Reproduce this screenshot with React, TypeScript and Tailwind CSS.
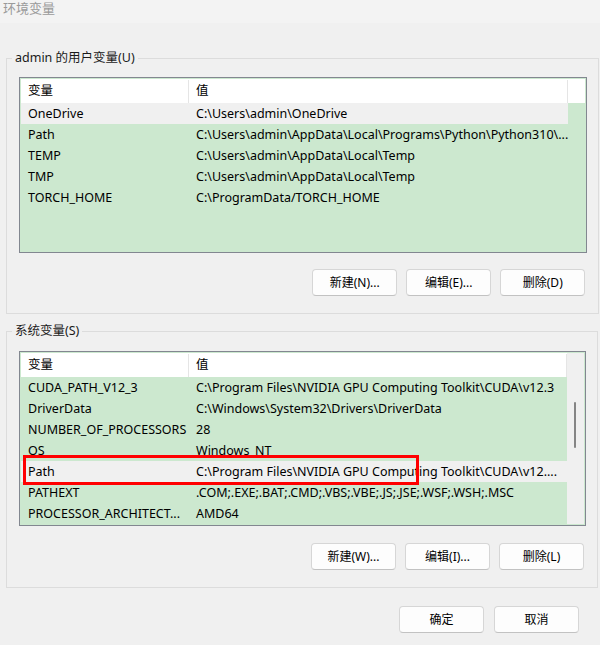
import React from "react";

type Row = { name: string; value: string; selected?: boolean; marked?: boolean };

const userVars: Row[] = [
  { name: "OneDrive", value: "C:\\Users\\admin\\OneDrive", selected: true },
  { name: "Path", value: "C:\\Users\\admin\\AppData\\Local\\Programs\\Python\\Python310\\..." },
  { name: "TEMP", value: "C:\\Users\\admin\\AppData\\Local\\Temp" },
  { name: "TMP", value: "C:\\Users\\admin\\AppData\\Local\\Temp" },
  { name: "TORCH_HOME", value: "C:\\ProgramData/TORCH_HOME" },
];

const systemVars: Row[] = [
  { name: "CUDA_PATH_V12_3", value: "C:\\Program Files\\NVIDIA GPU Computing Toolkit\\CUDA\\v12.3" },
  { name: "DriverData", value: "C:\\Windows\\System32\\Drivers\\DriverData" },
  { name: "NUMBER_OF_PROCESSORS", value: "28" },
  { name: "OS", value: "Windows_NT" },
  { name: "Path", value: "C:\\Program Files\\NVIDIA GPU Computing Toolkit\\CUDA\\v12....", selected: true, marked: true },
  { name: "PATHEXT", value: ".COM;.EXE;.BAT;.CMD;.VBS;.VBE;.JS;.JSE;.WSF;.WSH;.MSC" },
  { name: "PROCESSOR_ARCHITECT...", value: "AMD64" },
];

function WinButton({ label }: { label: string }) {
  return (
    <button className="w-[85px] h-[27px] rounded-[4px] bg-[#fdfdfd] border border-[#d6d6d6] border-b-[#c2c2c2] text-[12px] text-black leading-none">
      {label}
    </button>
  );
}

function VarList({ rows, height, scrollbar }: { rows: Row[]; height: string; scrollbar?: boolean }) {
  return (
    <div className={`${height} border border-[#828790] bg-[#cce8cf] p-px flex overflow-hidden`}>
      <div className="flex-1 flex flex-col">
        <div className="flex h-[24px] bg-white items-center pt-px">
          <div className="w-[168px] h-full flex items-center pl-[7px] border-r border-[#e5e5e5]">变量</div>
          <div className="flex-1 h-full flex items-center pl-[7px] border-r border-[#e5e5e5]">值</div>
        </div>
        {rows.map((r) => (
          <div key={r.name} className={`relative flex h-[21px] items-center pt-[2px] ${r.selected ? "bg-[#f0f0f0]" : ""}`}>
            <div className="w-[168px] pl-[7px] whitespace-nowrap overflow-hidden">{r.name}</div>
            <div className="flex-1 pl-[7px] whitespace-nowrap">{r.value}</div>
            {r.marked && (
              <div className="absolute -top-[6px] left-[2px] w-[396px] h-[30px] border-[3px] border-[#ff0000]" />
            )}
          </div>
        ))}
      </div>
      {scrollbar ? (
        <div className="w-[17px] bg-[#f0f0f0] relative">
          <div className="absolute left-[7px] top-[49px] w-[2px] h-[46px] bg-[#858585] rounded-full" />
        </div>
      ) : (
        <div className="w-[17px] flex flex-col">
          <div className="h-[24px] bg-white" />
        </div>
      )}
    </div>
  );
}

export default function App() {
  return (
    <div className="w-[600px] h-[645px] bg-[#f0f0f0] text-[12.5px] text-black font-['Noto_Sans','Noto_Sans_CJK_SC',sans-serif] overflow-hidden">
      <div className="h-[23px] bg-[#f3f3f3] pl-[3px] text-[13px] leading-[16px] text-[#9a9a9a]">环境变量</div>

      <fieldset className="ml-[6px] mt-[27px] w-[592px] border border-[#dcdcdc] pt-[11px] pb-[17px]">
        <legend className="ml-[5px] px-[3px] leading-[16px] text-[#1a1a1a]">admin 的用户变量(U)</legend>
        <div className="pl-[12px] pr-[11px]">
          <VarList rows={userVars} height="h-[176px]" />
          <div className="flex justify-end gap-[9px] mt-[16px] pr-[2px]">
            <WinButton label="新建(N)..." />
            <WinButton label="编辑(E)..." />
            <WinButton label="删除(D)" />
          </div>
        </div>
      </fieldset>

      <fieldset className="ml-[6px] mt-[9px] w-[592px] border border-[#dcdcdc] pt-[12px] pb-[17px]">
        <legend className="ml-[5px] px-[3px] leading-[16px] text-[#1a1a1a]">系统变量(S)</legend>
        <div className="pl-[12px] pr-[11px]">
          <VarList rows={systemVars} height="h-[175px]" scrollbar />
          <div className="flex justify-end gap-[9px] mt-[17px] pr-[2px]">
            <WinButton label="新建(W)..." />
            <WinButton label="编辑(I)..." />
            <WinButton label="删除(L)" />
          </div>
        </div>
      </fieldset>

      <div className="flex justify-end gap-[10px] pr-[21px] mt-[18px]">
        <WinButton label="确定" />
        <WinButton label="取消" />
      </div>
    </div>
  );
}
